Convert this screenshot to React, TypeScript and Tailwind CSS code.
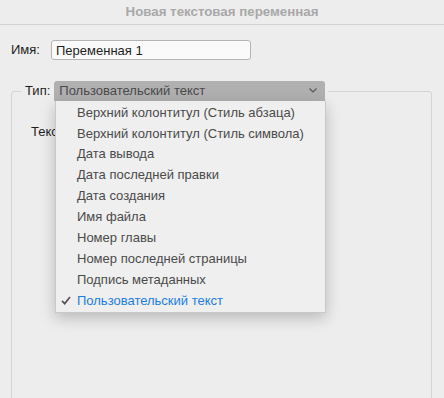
import React from "react";

const items = [
  "Верхний колонтитул (Стиль абзаца)",
  "Верхний колонтитул (Стиль символа)",
  "Дата вывода",
  "Дата последней правки",
  "Дата создания",
  "Имя файла",
  "Номер главы",
  "Номер последней страницы",
  "Подпись метаданных",
  "Пользовательский текст",
];

export default function App() {
  return (
    <div
      className="w-[444px] h-[398px] bg-[#ededed] overflow-hidden text-[13px] text-[#1e1e1e]"
      style={{ fontFamily: '"Liberation Sans", Arial, sans-serif' }}
    >
      <div className="h-[25px] border-b border-[#d2d2d2] flex items-center justify-center font-bold text-[13.3px] text-[#a8a8a8]">
        Новая текстовая переменная
      </div>
      <div className="pl-[11px] pr-[12px]">
        <div className="flex items-center mt-[15px] h-[20px]">
          <span className="w-[40px]">Имя:</span>
          <div className="w-[200px] h-[20px] bg-[#fafafa] border border-[#b4b4b4] rounded-[3px] flex items-center pl-[4px] pt-[1px]">
            Переменная 1
          </div>
        </div>
        <fieldset className="relative mt-[21px] h-[330px] border border-[#d4d4d4] rounded-[3px]">
          <legend className="ml-[9px] pr-[3px] flex items-center h-[20px]">
            <span className="pl-[4px] pr-[4px]">Тип:</span>
            <div className="relative w-[271px] h-[20px] bg-[#b0b0b0] rounded-t-[3px] flex items-center pl-[5px] text-[#4a4a4a]">
              Пользовательский текст
              <svg
                className="absolute right-[8px] top-[7px]"
                width="8"
                height="5"
                viewBox="0 0 8 5"
              >
                <path d="M0.5 0.5 L4 4 L7.5 0.5" fill="none" stroke="#555" strokeWidth="1.1" />
              </svg>
            </div>
          </legend>
          <div className="pl-[19px] pt-[21px]">Текст:</div>
          <div className="absolute left-[43px] top-0 w-[271px] bg-[#efefef] border border-[#c9c9c9] border-t-0 shadow-[0_5px_14px_rgba(0,0,0,0.22)] py-[1px]">
            {items.map((t, i) => {
              const sel = i === items.length - 1;
              return (
                <div
                  key={t}
                  className={`relative h-[20.9px] flex items-center pl-[21px] ${sel ? "text-[#1b7ee0]" : "text-[#4a4a4a]"}`}
                >
                  {sel && (
                    <svg className="absolute left-[5px] top-[6px]" width="10" height="9" viewBox="0 0 10 9">
                      <path d="M1 4.8 L3.7 7.6 L9 1" fill="none" stroke="#555" strokeWidth="1.7" />
                    </svg>
                  )}
                  {t}
                </div>
              );
            })}
          </div>
        </fieldset>
      </div>
    </div>
  );
}
